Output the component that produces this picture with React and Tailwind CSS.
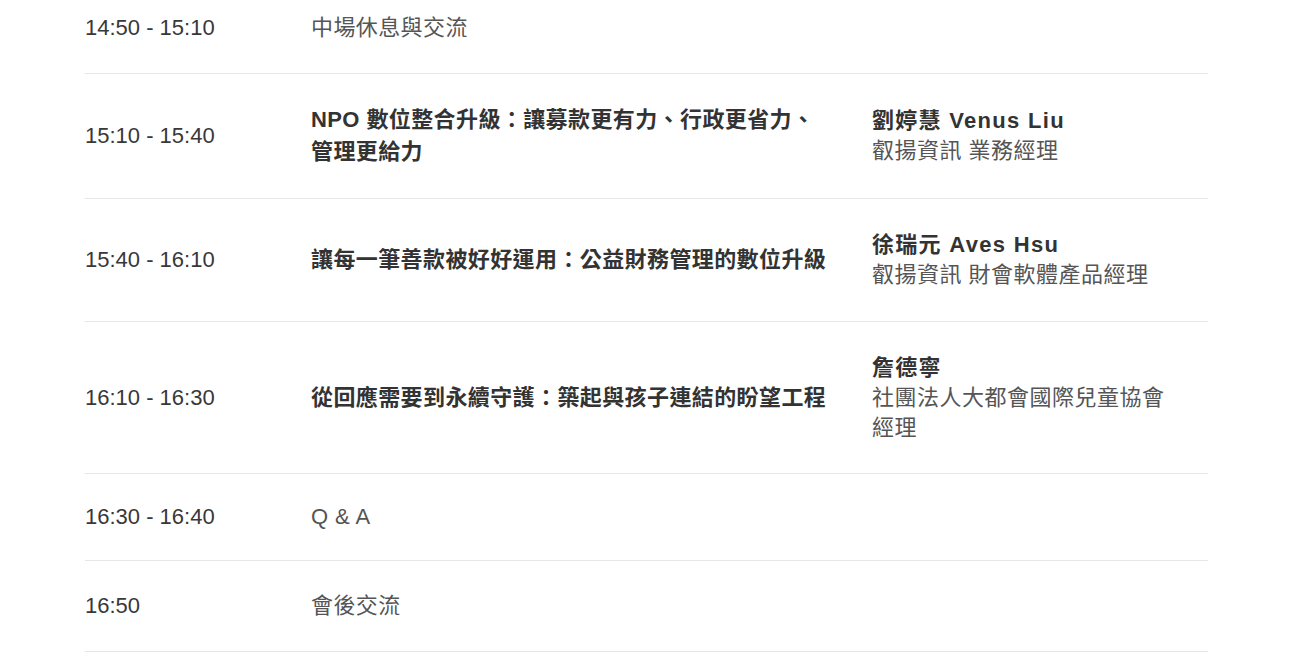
import React from 'react';

const sessions = [
  { time: '14:50 - 15:10', title: '中場休息與交流' },
  {
    time: '15:10 - 15:40',
    title: 'NPO 數位整合升級：讓募款更有力、行政更省力、管理更給力',
    bold: true,
    speaker: '劉婷慧 Venus Liu',
    org: '叡揚資訊 業務經理',
  },
  {
    time: '15:40 - 16:10',
    title: '讓每一筆善款被好好運用：公益財務管理的數位升級',
    bold: true,
    speaker: '徐瑞元 Aves Hsu',
    org: '叡揚資訊 財會軟體產品經理',
  },
  {
    time: '16:10 - 16:30',
    title: '從回應需要到永續守護：築起與孩子連結的盼望工程',
    bold: true,
    speaker: '詹德寧',
    org: '社團法人大都會國際兒童協會經理',
  },
  { time: '16:30 - 16:40', title: 'Q & A' },
  { time: '16:50', title: '會後交流' },
];

const rowPadding = ['pt-[13px] pb-[30px]', 'py-[29px]', 'py-[28px]', 'pt-[28px] pb-[27px]', 'py-[28px]', 'py-[30px]'];

const ScheduleRow = ({ item, pad }) => (
  <div className={`flex items-center border-b border-[#e6e6e6] ${pad}`}>
    <div className="w-[226px] shrink-0 text-[#383838]">{item.time}</div>
    <div className="w-[561px] shrink-0 pr-[40px]">
      {item.bold ? (
        <span className="text-[22px] font-bold leading-[32px] tracking-[0.4px] text-[#333]">{item.title}</span>
      ) : (
        <span className="tracking-[0.4px] text-[#555]">{item.title}</span>
      )}
    </div>
    {item.speaker && (
      <div className="w-[300px] py-[3px]">
        <div className="font-bold tracking-[1.3px] text-[#333]">{item.speaker}</div>
        <div className="tracking-[0.5px] text-[#555]">{item.org}</div>
      </div>
    )}
  </div>
);

export default function App() {
  return (
    <div
      className="min-h-screen bg-white text-[22px] leading-[30px]"
      style={{ fontFamily: '"Liberation Sans", Arial, "Noto Sans CJK TC", sans-serif' }}
    >
      <div className="ml-[85px] w-[1123px]">
        {sessions.map((item, i) => (
          <ScheduleRow key={item.time} item={item} pad={rowPadding[i]} />
        ))}
      </div>
    </div>
  );
}
